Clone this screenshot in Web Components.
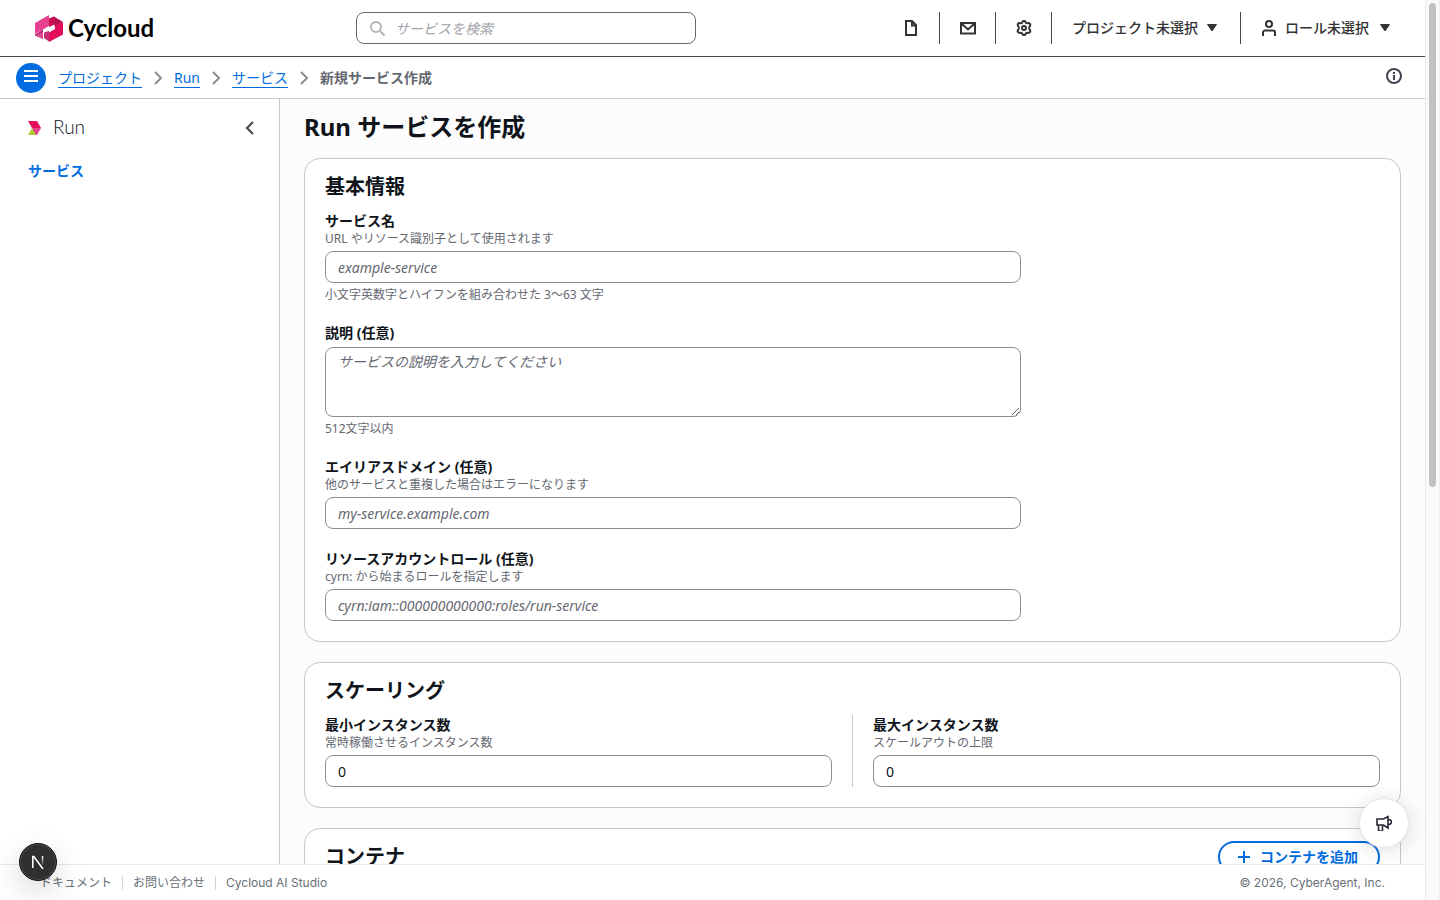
<!DOCTYPE html>
<html lang="ja">
<head>
<meta charset="utf-8">
<title>Run サービスを作成 | Cycloud</title>
<style>
html, body { margin: 0; height: 100%; }
body {
  font-family: "Noto Sans", "Noto Sans CJK JP", sans-serif;
  font-size: 14px; line-height: 20px; color: #0f141a; background: #fff;
  overflow: hidden;
}
</style>
</head>
<body>
<cy-app></cy-app>
<script>
const define = (name, html, setup) => {
  const template = document.createElement('template');
  template.innerHTML = `<style>*{box-sizing:border-box}button,input,textarea{font:inherit;color:inherit;margin:0}button{background:none;border:0;padding:0;cursor:pointer}svg{display:block;flex:none}</style>` + html;
  customElements.define(name, class extends HTMLElement {
    constructor() {
      super();
      this.attachShadow({ mode: 'open' }).append(template.content.cloneNode(true));
    }
    connectedCallback() { if (setup) setup(this, this.shadowRoot); }
  });
};

const ICONS = {
  file: '<path d="M3 1h6l4 4v10H3zM9 1v4.500h4"/>',
  mail: '<path d="M1 3h14v10.500H1zM2 4l6 5.500L14 4"/>',
  gear: '<path d="M8 .9c1 0 1.500.6 1.800 1.500.3.700 1 1 1.700.8 1-.2 1.900-.1 2.500.8s.3 1.800-.4 2.500c-.5.600-.5 2.400 0 3 .7.700.9 1.600.4 2.500s-1.500 1-2.500.8c-.7-.2-1.400.1-1.700.8-.3.900-.8 1.500-1.800 1.500s-1.500-.6-1.800-1.500c-.3-.7-1-1-1.700-.8-1 .2-1.900.1-2.500-.8s-.3-1.800.4-2.500c.5-.6.500-2.400 0-3C1.700 5.800 1.500 4.900 2 4s1.500-1 2.500-.8c.7.200 1.400-.1 1.700-.8C6.500 1.500 7 .9 8 .9z"/><circle cx="8" cy="8" r="2"/>',
  user: '<circle cx="8" cy="4" r="3"/><path d="M2 16v-3.500a2 2 0 0 1 2-2h8a2 2 0 0 1 2 2V16"/>',
  down: '<path d="M3.500 4.500h9L8 11z" fill="currentColor"/>',
  search: '<circle cx="7" cy="7" r="5"/><path d="m11 11 4.500 4.500"/>',
  menu: '<path d="M1 3h14M1 8h14M1 13h14"/>',
  info: '<circle cx="8" cy="8" r="7"/><path d="M8 7v5M8 4v2"/>',
  right: '<path d="m5 2 6 6-6 6"/>',
  left: '<path d="M11 2 5 8l6 6"/>',
  plus: '<path d="M8 2v12M2 8h12"/>',
  megaphone: '<path d="M1 4h6.500L12 1.500v11.500L7.500 10H1zM2.500 10v6h4v-6M12.500 4.500c2 0 3 1.200 3 2.500s-1 2.500-3 2.500"/>'
};
define('cy-icon', `<style>:host{display:block;flex:none}svg{fill:none;stroke:currentColor;stroke-width:2}</style><svg viewBox="0 0 16 16" aria-hidden="true"></svg>`, (host, root) => {
  const svg = root.querySelector('svg');
  svg.setAttribute('width', 16);
  svg.setAttribute('height', 16);
  svg.style.strokeWidth = host.getAttribute('stroke') || 2;
  svg.innerHTML = ICONS[host.getAttribute('name')];
});

define('cy-logo', `<style>
:host{display:block}
a{display:flex;align-items:center;gap:5px;color:#000;text-decoration:none;font:700 24px/28px Lato,"Noto Sans",sans-serif}
</style>
<a href="#"><svg width="28" height="27" viewBox="0 0 28 27" aria-hidden="true">
<path fill="#e5418f" d="M0 8 14 0v11l-6 3.500L0 19z"/>
<path fill="#b5296f" d="m0 19.500 8-5V24L0 20.500z"/>
<path fill="#e04a92" d="M1 20.500 8 17v6.500z"/>
<path fill="#b80f4e" d="M14 3.500 19 1.500 28 7l-9 5-5-1z"/>
<path fill="#d01055" d="m14 4 5-2v8l-5 2z"/>
<path fill="#e30e5b" d="M20 11 28 7v12.500L14 27v-9.500l6-3.500z"/>
<path fill="#c2337a" d="m9 17 5-1v10.500L9 23z"/>
<path fill="#fff" d="m8 15 11.500-5.500v3.500L8 18z"/>
</svg><span>Cycloud</span></a>`);

define('cy-topbar', `<style>
:host{display:grid;grid-template-columns:321px 340px 1fr;align-items:center;height:57px;border-bottom:1px solid #424650;padding:0 12px 0 35px;color:#333}
label{display:flex;align-items:center;gap:10px;height:32px;padding:0 12px;border:1px solid #656871;border-radius:8px;color:#b4b4bb}
input{border:0;outline:0;padding:0;background:none;flex:1;min-width:0;height:28px}
input::placeholder{color:#a4a4ad;font-style:italic;opacity:1}
nav{display:flex;align-items:center;justify-self:end}
button{display:flex;align-items:center;gap:8px;height:32px;padding:0 20px;border-left:1px solid #424650;font-weight:500;white-space:nowrap}
.icon{justify-content:center;width:56px;padding:0}
.icon:first-child{border:0}
.project{gap:6px}
</style>
<cy-logo></cy-logo>
<label><cy-icon name="search"></cy-icon><input type="search" placeholder="サービスを検索" aria-label="サービスを検索"></label>
<nav>
<button class="icon" aria-label="ドキュメント"><cy-icon name="file"></cy-icon></button>
<button class="icon" aria-label="お知らせ"><cy-icon name="mail"></cy-icon></button>
<button class="icon" aria-label="設定"><cy-icon name="gear"></cy-icon></button>
<button class="project">プロジェクト未選択<cy-icon name="down" stroke="1"></cy-icon></button>
<button><cy-icon name="user"></cy-icon>ロール未選択<cy-icon name="down" stroke="1"></cy-icon></button>
</nav>`);

define('cy-crumbs', `<style>
:host{display:flex;align-items:center;height:42px;border-bottom:1px solid #c6c6cd;padding:0 23px 0 16px}
button{padding-bottom:4px}
.menu{display:grid;place-items:center;width:30px;height:30px;border-radius:50%;background:#006ce0;color:#fff}
nav{flex:1;display:flex;align-items:center;gap:8px;margin-left:12px;color:#8c8c94}
a{color:#006ce0;text-decoration:none;border-bottom:1px solid #006ce0;line-height:19px}
b{color:#656871;font-weight:700}
.info{color:#424650}
</style>
<button class="menu" aria-label="メニュー"><cy-icon name="menu"></cy-icon></button>
<nav aria-label="パンくず"><a href="#">プロジェクト</a><cy-icon name="right"></cy-icon><a href="#">Run</a><cy-icon name="right"></cy-icon><a href="#">サービス</a><cy-icon name="right"></cy-icon><b>新規サービス作成</b></nav>
<button class="info" aria-label="情報"><cy-icon name="info"></cy-icon></button>`);

define('cy-sidebar', `<style>
:host{display:block;width:280px;flex:none;border-right:1px solid #c6c6cd;background:#fff;padding:17px 19px 0 28px}
header{display:flex;align-items:center;gap:11px;height:24px;color:#0f141a}
h2{flex:1;margin:0;padding-bottom:2px;font:300 19px/22px Lato,"Noto Sans",sans-serif}
button{padding:2px;color:#424650}
nav{margin-top:21px}
a{color:#006ce0;text-decoration:none;font-weight:700}
</style>
<header><svg width="14" height="14" viewBox="0 0 14 14" aria-hidden="true"><path fill="#e30e5b" d="M0 0h9l4 7H4z"/><path fill="#e5418f" d="M4 7h9l-4 7H7z"/><path fill="#a9c935" d="m4 7 4 7H0z"/></svg><h2>Run</h2><button aria-label="閉じる"><cy-icon name="left"></cy-icon></button></header>
<nav><a href="#">サービス</a></nav>`);

define('cy-card', `<style>
:host{display:block;border:1px solid #c6c6cd;border-radius:16px;background:#fff;padding:12px 20px 20px}
header{display:flex;justify-content:space-between;height:32px}
h2{margin:0;font-size:20px;line-height:32px;font-weight:700}
.body{margin-top:8px}
</style><header><h2></h2><slot name="action"></slot></header><div class="body"><slot></slot></div>`, (host, root) => {
  root.querySelector('h2').textContent = host.getAttribute('heading');
});

define('cy-field', `<style>
:host{display:block}
label{display:block;font-weight:700;line-height:20px}
p{margin:0;font-size:12px;line-height:16px;color:#656871}
.control{margin-top:4px}
input,textarea{display:block;width:100%;height:32px;padding:4px 12px;border:1px solid #8c8c94;border-radius:8px;background:#fff;outline:0}
textarea{height:70px;resize:vertical;line-height:20px}
::placeholder{color:#656871;font-style:italic;opacity:1}
.note{margin-top:4px}
p:empty{display:none}
</style><label for="c"></label><p class="hint"></p><div class="control"></div><p class="note"></p>`, (host, root) => {
  const get = (n) => host.getAttribute(n) || '';
  root.querySelector('label').textContent = get('label');
  root.querySelector('.hint').textContent = get('hint');
  root.querySelector('.note').textContent = get('note');
  const control = document.createElement(host.hasAttribute('multiline') ? 'textarea' : 'input');
  control.id = 'c';
  control.placeholder = get('placeholder');
  control.value = get('value');
  root.querySelector('.control').replaceChildren(control);
});

define('cy-form', `<style>
:host{display:block;flex:1;min-width:0;overflow:hidden;background:#fcfcfd;padding:12px 24px 0}
h1{margin:0 0 15px;font-size:24px;line-height:32px;font-weight:700}
.cards{display:grid;gap:20px}
.stack{display:grid;gap:20px;width:66%}
.pair{display:grid;grid-template-columns:1fr 1px 1fr;column-gap:20px}
.rule{background:#c6c6cd}
button{display:flex;align-items:center;gap:8px;height:32px;padding:0 20px 0 16px;border:2px solid #006ce0;border-radius:20px;color:#006ce0;font-weight:700}
</style>
<h1>Run サービスを作成</h1>
<div class="cards">
<cy-card heading="基本情報"><div class="stack">
<cy-field label="サービス名" hint="URL やリソース識別子として使用されます" placeholder="example-service" note="小文字英数字とハイフンを組み合わせた 3〜63 文字"></cy-field>
<cy-field multiline label="説明 (任意)" placeholder="サービスの説明を入力してください" note="512文字以内"></cy-field>
<cy-field label="エイリアスドメイン (任意)" hint="他のサービスと重複した場合はエラーになります" placeholder="my-service.example.com"></cy-field>
<cy-field label="リソースアカウントロール (任意)" hint="cyrn: から始まるロールを指定します" placeholder="cyrn:iam::000000000000:roles/run-service"></cy-field>
</div></cy-card>
<cy-card heading="スケーリング"><div class="pair">
<cy-field label="最小インスタンス数" hint="常時稼働させるインスタンス数" value="0"></cy-field>
<div class="rule"></div>
<cy-field label="最大インスタンス数" hint="スケールアウトの上限" value="0"></cy-field>
</div></cy-card>
<cy-card heading="コンテナ"><button slot="action"><cy-icon name="plus"></cy-icon>コンテナを追加</button></cy-card>
</div>`);

define('cy-footer', `<style>
:host{display:flex;align-items:center;justify-content:space-between;height:36px;border-top:1px solid #e9ebed;background:#fff;padding:0 40px;font:12px/14px Inter,"Noto Sans CJK JP",sans-serif;color:#687078}
nav{display:flex}
a{color:inherit;text-decoration:none;padding:0 10px;border-left:1px solid #d1d5db}
a:first-child{border:0;padding-left:0}
</style><nav><a href="#">ドキュメント</a><a href="#">お問い合わせ</a><a href="#">Cycloud AI Studio</a></nav><span>© 2026, CyberAgent, Inc.</span>`);

define('cy-feedback', `<style>
:host{position:fixed;right:31px;bottom:52px}
button{display:grid;place-items:center;width:50px;height:50px;border:1px solid #e4e4e8;border-radius:50%;background:#fff;color:#2b2536;box-shadow:0 2px 20px rgba(0,0,0,.14)}
</style><button aria-label="フィードバック"><cy-icon name="megaphone" stroke="1.6"></cy-icon></button>`);

define('cy-devtools', `<style>
:host{position:fixed;left:19px;bottom:19px}
button{display:grid;place-items:center;width:38px;height:38px;border-radius:50%;background:#2f2f2f;border:1px solid #111;box-shadow:inset 0 0 0 1px #4a4a4a,0 10px 30px rgba(0,0,0,.16)}
</style><button aria-label="開発ツール"><svg width="14" height="14" viewBox="0 0 14 14" fill="none" aria-hidden="true"><defs><linearGradient id="a" x1="0" y1="0" x2="0" y2="1"><stop stop-color="#fff"/><stop offset="1" stop-color="#fff" stop-opacity=".1"/></linearGradient></defs><path d="M1.800 13V1.500h1L12 14" stroke="#fff" stroke-width="1.600"/><path fill="url(#a)" d="M10.800 1h1.500v9h-1.500z"/></svg></button>`);

define('cy-scrollbar', `<style>
:host{display:block;width:15px;background:#fafafa;border-left:1px solid #e8e8e8;border-right:1px solid #ededed;padding:3px 3px 0}
div{height:54%;border-radius:4px;background:#c1c1c1}
</style><div></div>`);

define('cy-app', `<style>
:host{display:flex;height:100vh}
.page{flex:1;min-width:0;display:flex;flex-direction:column}
main{flex:1;min-height:0;display:flex}
cy-topbar,cy-crumbs,cy-footer{flex:none}
</style><div class="page"><cy-topbar></cy-topbar><cy-crumbs></cy-crumbs><main><cy-sidebar></cy-sidebar><cy-form></cy-form></main><cy-footer></cy-footer></div><cy-scrollbar></cy-scrollbar><cy-feedback></cy-feedback><cy-devtools></cy-devtools>`);
</script>
</body>
</html>
